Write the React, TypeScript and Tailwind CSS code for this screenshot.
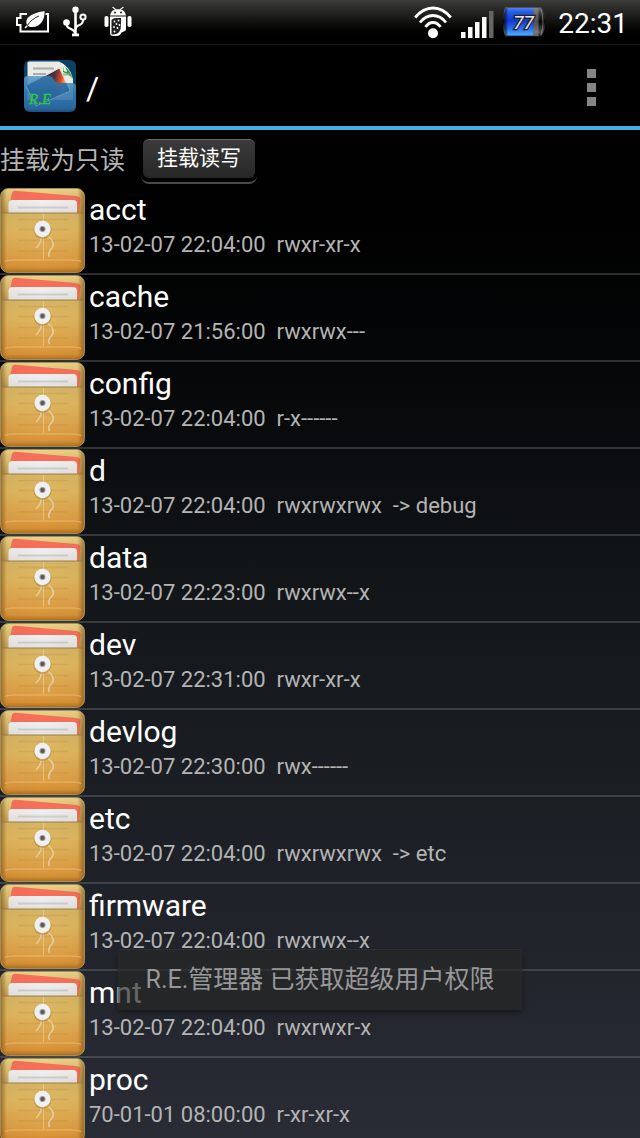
const entries = [
  { name: 'acct', date: '13-02-07 22:04:00', mode: 'rwxr-xr-x' },
  { name: 'cache', date: '13-02-07 21:56:00', mode: 'rwxrwx---' },
  { name: 'config', date: '13-02-07 22:04:00', mode: 'r-x------' },
  { name: 'd', date: '13-02-07 22:04:00', mode: 'rwxrwxrwx', link: 'debug' },
  { name: 'data', date: '13-02-07 22:23:00', mode: 'rwxrwx--x' },
  { name: 'dev', date: '13-02-07 22:31:00', mode: 'rwxr-xr-x' },
  { name: 'devlog', date: '13-02-07 22:30:00', mode: 'rwx------' },
  { name: 'etc', date: '13-02-07 22:04:00', mode: 'rwxrwxrwx', link: 'etc' },
  { name: 'firmware', date: '13-02-07 22:04:00', mode: 'rwxrwx--x' },
  { name: 'mnt', date: '13-02-07 22:04:00', mode: 'rwxrwxr-x' },
  { name: 'proc', date: '70-01-01 08:00:00', mode: 'r-xr-xr-x' },
];

// gradients and the folder drawing, shared by every row
const FolderDefs = () => (
  <svg width="0" height="0" className="absolute" aria-hidden="true">
    <defs>
      <linearGradient id="folder-back" x1="0" y1="0" x2="0" y2="1">
        <stop offset="0" stopColor="#ecd488" />
        <stop offset="0.15" stopColor="#d9bd70" />
        <stop offset="0.28" stopColor="#c5a35c" />
        <stop offset="1" stopColor="#b97a2a" />
      </linearGradient>
      <linearGradient id="folder-front" x1="0" y1="0" x2="0" y2="1">
        <stop offset="0" stopColor="#d6b566" />
        <stop offset="0.3" stopColor="#dfb75f" />
        <stop offset="0.8" stopColor="#dc9c43" />
        <stop offset="0.92" stopColor="#d79135" />
        <stop offset="1" stopColor="#b0701f" />
      </linearGradient>
      <linearGradient id="folder-side" x1="0" y1="0" x2="1" y2="0">
        <stop offset="0" stopColor="#7d5216" stopOpacity="0.65" />
        <stop offset="0.07" stopColor="#7d5216" stopOpacity="0.05" />
        <stop offset="0.5" stopColor="#7d5216" stopOpacity="0" />
        <stop offset="0.92" stopColor="#7d5216" stopOpacity="0.05" />
        <stop offset="1" stopColor="#7d5216" stopOpacity="0.65" />
      </linearGradient>
      <linearGradient id="folder-paper" x1="0" y1="0" x2="0" y2="1">
        <stop offset="0" stopColor="#f1f1f1" />
        <stop offset="1" stopColor="#e2e2e2" />
      </linearGradient>
    </defs>
    <symbol id="folder" viewBox="0 0 85 85">
      <rect x="0.5" y="0.5" width="84" height="84" rx="8" fill="url(#folder-back)" stroke="#a08c5c" />
      <path d="M10.500 12 L12 5 Q12.500 2.500 15.500 2.700 L76 8 Q81 8.500 80.500 12 L78.500 26 H11 Z" fill="#f76f5b" />
      <path d="M8.500 26 V16 Q8.500 12 12.500 12 H73 Q77 12 77 16 V26 Z" fill="url(#folder-paper)" />
      <path d="M18 19.500 H68" stroke="#cecece" strokeWidth="2" />
      <path d="M1 25 H84 V77 Q84 84 77 84 H8 Q1 84 1 77 Z" fill="url(#folder-front)" />
      <rect x="1" y="1" width="83" height="83" rx="8" fill="url(#folder-side)" />
      <path d="M1 25 H84" stroke="#98793c" strokeWidth="1.500" opacity="0.6" />
      <path d="M18 31.500 H68 M18 41.500 H68 M18 52.500 H68 M18 63 H68" stroke="#b88d43" strokeWidth="1.500" opacity="0.3" />
      <path d="M5 73.500 Q8 72 12 72 H73 Q78 72 81 73.500" fill="none" stroke="#eebd77" strokeWidth="1.200" opacity="0.8" />
      <path d="M43.500 26 V71" stroke="#ecd6a4" strokeWidth="1" opacity="0.6" />
      <path d="M41 49 Q42 54 36 60 M48 48 Q56 55 52 60 Q47 65 49.500 69" fill="none" stroke="#e6d2ac" strokeWidth="1.600" opacity="0.85" />
      <circle cx="42.500" cy="42" r="9" fill="#8c5e20" opacity="0.35" />
      <circle cx="42.500" cy="41" r="8.200" fill="#f0f0f0" />
      <circle cx="42.500" cy="41" r="3" fill="#999" />
      <circle cx="42.500" cy="41" r="1.900" fill="#555" />
    </symbol>
  </svg>
);

const BatteryLeafIcon = () => (
  <svg width="34" height="24" viewBox="0 0 34 24" fill="none">
    <path d="M11 4 H4.500 V8 H1 V15 H4.500 V21.500 H32 V4 H29.500" stroke="#fff" strokeWidth="2" />
    <path d="M28.500 1 C29 9 25 17 16 17 C14 17 13 16.500 12 16 L9.500 18.500 L8.500 17.500 L11 15 C8 7 17 3 28.500 1 Z" fill="#fff" />
    <path d="M11 16 C14 11 18 8 23 6" stroke="#222" strokeWidth="1" />
  </svg>
);

const UsbIcon = () => (
  <svg width="26" height="32" viewBox="0 0 26 32" fill="none" stroke="#fff" strokeWidth="2">
    <path d="M13.500 4 V29" strokeWidth="2.600" />
    <path d="M4.500 17 Q4 21 8 22.500 Q12 24 13 27 M21 12 Q22 17 17.500 19 Q14 20 13.500 23" />
    <circle cx="13.500" cy="3.800" r="3.200" fill="#fff" stroke="none" />
    <circle cx="4.500" cy="16.500" r="3.300" fill="#fff" stroke="none" />
    <circle cx="21" cy="11" r="2.600" fill="#222" />
    <rect x="10" y="27.500" width="7" height="2.800" fill="#fff" stroke="none" />
  </svg>
);

const AndroidIcon = () => (
  <svg width="28" height="32" viewBox="0 0 28 32" fill="#fff">
    <path d="M6 9.500 Q7 4.500 11 3.600 L8 1.500 L9 0.700 L12.300 3.200 H15.700 L19 0.700 L20 1.500 L17 3.600 Q21 4.500 22 9.500 Z" />
    <circle cx="11" cy="6.500" r="1" fill="#222" />
    <circle cx="17" cy="6.500" r="1" fill="#222" />
    <rect x="0.500" y="10" width="4" height="11" rx="1.800" />
    <rect x="23.500" y="10" width="4" height="11" rx="1.800" />
    <path d="M6 10.500 H22 V23 Q22 25 20 25.500 L17.500 26.500 Q16 30 12 30 H9 Q6 30 6 27 Z" />
    <path d="M7.500 14 Q9 12 12 12 H17 V19 Q17 28 10 28.500 H7.500 Z" fill="#222" />
    <g>
      <circle cx="10.500" cy="15.500" r="0.900" />
      <circle cx="14.500" cy="14.500" r="0.900" />
      <circle cx="12.500" cy="18" r="0.900" />
      <circle cx="15.500" cy="19" r="0.900" />
      <circle cx="10" cy="21" r="0.900" />
      <circle cx="13.500" cy="22" r="0.900" />
      <circle cx="10.500" cy="25.500" r="0.900" />
    </g>
  </svg>
);

const WifiIcon = () => (
  <svg width="38" height="33" viewBox="0 0 38 33" fill="none" stroke="#fff" strokeWidth="2.800">
    <path d="M1.200 11.500 Q9 2 19 2 Q29 2 36.800 11.500" />
    <path d="M6 16.500 Q11.500 9.500 19 9.500 Q26.500 9.500 32 16.500" />
    <path d="M11.500 21 Q14.500 16.500 19 16.500 Q23.500 16.500 26.500 21" />
    <circle cx="19" cy="27.200" r="5" fill="#fff" stroke="none" />
  </svg>
);

const SignalIcon = () => (
  <svg width="34" height="27" viewBox="0 0 34 27" fill="#fff">
    <rect x="1" y="21" width="4.500" height="6" />
    <rect x="8" y="16" width="4.500" height="11" />
    <rect x="15" y="11" width="4.500" height="16" />
    <rect x="22" y="6" width="4.500" height="21" />
    <rect x="29" y="0" width="4.500" height="27" fill="#666" />
  </svg>
);

const BatteryIcon = () => (
  <svg width="44" height="30" viewBox="0 0 44 30">
    <defs>
      <linearGradient id="cell-blue" x1="0" y1="0" x2="0" y2="1">
        <stop offset="0" stopColor="#4a86f2" />
        <stop offset="0.12" stopColor="#2a5fe8" />
        <stop offset="0.45" stopColor="#1238d2" />
        <stop offset="0.7" stopColor="#2a66ea" />
        <stop offset="0.95" stopColor="#4aa4fa" />
        <stop offset="1" stopColor="#2a5690" />
      </linearGradient>
      <linearGradient id="cell-shade" x1="0" y1="0" x2="1" y2="0">
        <stop offset="0" stopColor="#000" stopOpacity="0.75" />
        <stop offset="0.15" stopColor="#000" stopOpacity="0" />
        <stop offset="1" stopColor="#000" stopOpacity="0" />
      </linearGradient>
      <linearGradient id="cell-case" x1="0" y1="0" x2="0" y2="1">
        <stop offset="0" stopColor="#777" />
        <stop offset="0.2" stopColor="#3a3a3a" />
        <stop offset="0.5" stopColor="#060606" />
        <stop offset="0.85" stopColor="#555" />
        <stop offset="1" stopColor="#222" />
      </linearGradient>
    </defs>
    <path d="M3 0.500 H39 Q43 6 43.500 15 Q43 24 39 29.500 H3 Q1 24 1 15 Q1 6 3 0.500 Z" fill="url(#cell-case)" />
    <path d="M3.500 1 H31.500 V29 H3.500 Q2 22 2 15 Q2 8 3.500 1 Z" fill="url(#cell-blue)" />
    <path d="M3.500 1 H31.500 V29 H3.500 Q2 22 2 15 Q2 8 3.500 1 Z" fill="url(#cell-shade)" />
    <rect x="31.500" y="1" width="5" height="28" fill="#999" opacity="0.5" />
    <path d="M39 2 Q43 15 39 28" stroke="#999" strokeWidth="1" fill="none" opacity="0.6" />
    <text x="21.500" y="21.500" textAnchor="middle" fontFamily="Roboto, sans-serif" fontSize="19" fontStyle="italic" fill="#e8e8e8" stroke="#222" strokeWidth="2.500" paintOrder="stroke">77</text>
  </svg>
);

const AppLogo = () => (
  <svg width="52" height="52" viewBox="0 0 52 52">
    <defs>
      <linearGradient id="logo-front" x1="0" y1="0" x2="0" y2="1">
        <stop offset="0" stopColor="#5a9fcb" />
        <stop offset="0.4" stopColor="#3880b6" />
        <stop offset="0.9" stopColor="#2b6ca5" />
        <stop offset="1" stopColor="#1d4f80" />
      </linearGradient>
      <linearGradient id="logo-photo" x1="0" y1="0.300" x2="1" y2="0.500">
        <stop offset="0" stopColor="#24344f" />
        <stop offset="0.6" stopColor="#4a3144" />
        <stop offset="0.78" stopColor="#e8501a" />
        <stop offset="0.86" stopColor="#f8a060" />
        <stop offset="1" stopColor="#5b2522" />
      </linearGradient>
      <clipPath id="logo-pocket">
        <path d="M0 20 Q0 16 4 16 H24 Q28 16 30 20 Q31 23 35 23 H48 Q52 23 52 27 V45 Q52 52 45 52 H7 Q0 52 0 45 Z" />
      </clipPath>
    </defs>
    <rect width="52" height="52" rx="6" fill="#0d4065" />
    <path d="M3.500 3 Q3.500 1.500 5 1.500 H35 Q46 6 49 19 V40 H3.500 Z" fill="#e9ebe5" />
    <path d="M39 5 Q46 10 49 19 Q45 14 39 12 Z" fill="#1b9a2a" />
    <path d="M35 1.500 Q40 4 39.500 11 Q46 12 49 19 Q46 14 43 12 Q42 5 35 1.500 Z" fill="#f8fbf5" />
    <path d="M9 8.500 H30 M9 14 H22 M38 14.500 H45" stroke="#aaa" strokeWidth="2" />
    <path d="M2 26 L35.500 8 L46 31 L12 46 Z" fill="url(#logo-photo)" stroke="#e5dfdb" strokeWidth="1" />
    <path d="M0 20 Q0 16 4 16 H24 Q28 16 30 20 Q31 23 35 23 H48 Q52 23 52 27 V45 Q52 52 45 52 H7 Q0 52 0 45 Z" fill="url(#logo-front)" opacity="0.9" />
    <g clipPath="url(#logo-pocket)">
      <path d="M2 26 L35.500 8 L46 31 L12 46 Z" fill="#1e5d94" opacity="0.55" />
      <path d="M2 26 L12 46 L46 31 L44 25" fill="none" stroke="#7fb2d6" strokeWidth="1" opacity="0.5" />
    </g>
    <text x="5" y="44" fontFamily="'Liberation Serif', serif" fontSize="15" fontStyle="italic" fill="#2ecb3c" stroke="#2ecb3c" strokeWidth="0.300">R.E</text>
  </svg>
);

export default function App() {
  return (
    <div className="relative flex h-screen w-full flex-col overflow-hidden bg-linear-to-b from-black via-[#121518] to-[#292c35] font-[Roboto,'Noto_Sans_CJK_SC',sans-serif] text-white">
      <FolderDefs />
      <div className="flex h-11 shrink-0 items-center justify-between bg-linear-to-b from-[#3c3c3a] to-black pr-3 pl-4">
        <div className="flex items-center gap-3">
          <BatteryLeafIcon />
          <UsbIcon />
          <div className="pl-1">
            <AndroidIcon />
          </div>
        </div>
        <div className="flex items-center gap-2">
          <WifiIcon />
          <div className="pt-1">
            <SignalIcon />
          </div>
          <BatteryIcon />
          <span className="pt-1 pl-1 text-[28px] leading-9">22:31</span>
        </div>
      </div>
      <header className="flex h-[86px] shrink-0 items-center border-t border-b-4 border-t-[#1c1c1c] border-b-[#42afe0] bg-black pr-10 pl-6">
        <AppLogo />
        <h1 className="pt-1 pl-2.5 text-[32px] leading-10">/</h1>
        <button aria-label="菜单" className="ml-auto flex flex-col gap-[5px] px-1 pt-1">
          <span className="size-[9px] bg-[#858585]" />
          <span className="size-[9px] bg-[#858585]" />
          <span className="size-[9px] bg-[#858585]" />
        </button>
      </header>
      <div className="flex h-[58px] shrink-0 items-center gap-4 pt-1">
        <span className="text-[25px] leading-8 text-[#b4b4b4]">挂载为只读</span>
        <div className="rounded-lg border-b-2 border-[#4a4a4a] bg-black px-0.5 pb-1">
          <button className="flex h-[39px] items-center rounded-md border-t border-[#6a6a6a] bg-linear-to-b from-[#3b3b3b] to-[#272727] px-3.5 text-[21px]">
            挂载读写
          </button>
        </div>
      </div>
      <ul>
        {entries.map(item => (
          <li key={item.name} className="border-b-2 border-[#7d8285]/35">
            <button className="flex w-full items-start gap-1 text-left">
              <svg width="85" height="85" className="shrink-0" aria-hidden="true">
                <use href="#folder" />
              </svg>
              <div className="pt-1">
                <p className="text-[30px] leading-9">{item.name}</p>
                <p className="text-[22px] leading-[34px] whitespace-pre text-[#b4b4b4]">
                  {item.date}{'  '}{item.mode}{item.link && `  -> ${item.link}`}
                </p>
              </div>
            </button>
          </li>
        ))}
      </ul>
      <div role="status" className="absolute bottom-32 left-1/2 -translate-x-1/2 rounded-sm border-t border-white/5 bg-[#262627]/70 px-7 py-3.5 text-[25px] leading-8 whitespace-nowrap text-[#98989a] shadow-md shadow-black/30">
        R.E.管理器 已获取超级用户权限
      </div>
    </div>
  );
}
